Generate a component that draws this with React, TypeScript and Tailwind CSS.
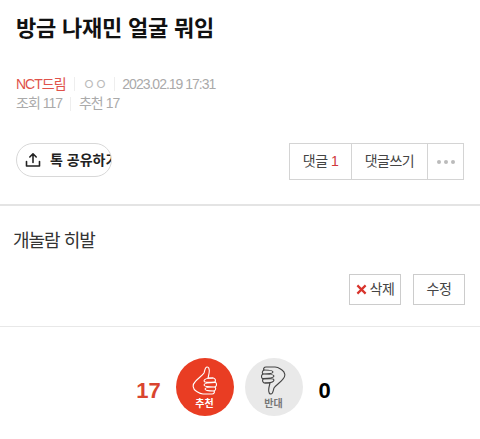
import React from "react";

const ThumbIcon: React.FC<{ className?: string }> = ({ className }) => (
  <svg viewBox="5 4 25 29" fill="none" stroke="currentColor" strokeWidth="1.1" strokeLinejoin="round" strokeLinecap="round" className={className}>
    <path d="M20 5C18 5 18 8 17 11C15 14 10 17 8 20C5 23 6 27 9 29C12 31 13 32 16 32L25 32C27 32 28 30 27 29C29 28 29 26 28 25C30 24 30 21 28 20C29 18 28 16 26 16L21 16C22 12 23 9 22 7C22 6 21 5 20 5Z" />
    <path d="M26 16C21 16 17 17 17 19C17 20.500 20 20.500 28 20M28 20.500C21 20.500 17 21 17 23C17 24.500 21 25 28 25M28 25C22 25 18 25.500 18 27C18 28.500 22 29 27 29" />
  </svg>
);

const App: React.FC = () => {
  return (
    <div className="w-[480px] h-[439px] overflow-hidden bg-white font-['Liberation_Sans','Noto_Sans_CJK_KR',sans-serif]">
      <div className="px-4 pt-[13px]">
        <h1 className="text-[22px] leading-[32px] font-bold text-[#111] tracking-[-0.2px]">방금 나재민 얼굴 뭐임</h1>
        <div className="mt-[29px] flex items-center text-[14px] leading-[20px] tracking-[-1px] text-[#aaa]">
          <span className="text-[#e0524a]">NCT드림</span>
          <span className="mx-[8px] h-[14px] w-px bg-[#eee]" />
          <span className="text-[#bbb]">ㅇㅇ</span>
          <span className="ml-[8px] mr-[7px] h-[14px] w-px bg-[#eee]" />
          <span>2023.02.19 17:31</span>
        </div>
        <div className="flex items-center text-[14px] leading-[19px] tracking-[-1px] text-[#aaa]">
          <span>조회 117</span>
          <span className="mx-[8px] h-[14px] w-px bg-[#eee]" />
          <span>추천 17</span>
        </div>
      </div>

      <div className="mt-[30px] flex items-start justify-between pl-4 pr-4">
        <button className="flex h-[34px] w-[96px] items-center overflow-hidden rounded-full border border-[#d8d8d8] pl-[8px] whitespace-nowrap text-[14px] font-bold text-[#222]">
          <svg viewBox="0 0 16 16" fill="none" stroke="#222" strokeWidth="1.6" strokeLinecap="round" strokeLinejoin="round" className="mr-[9px] h-[16px] w-[16px] shrink-0">
            <path d="M8 10.500V2M4.800 5 8 1.800 11.200 5M1.500 9.500v4.500h13V9.500" />
          </svg>
          <span>톡 공유하기</span>
        </button>
        <div className="flex h-[37px] border border-[#d4d4d4] text-[14px] tracking-[-0.5px] text-[#444]">
          <span className="flex w-[62px] items-center justify-center border-r border-[#d4d4d4]">
            댓글&nbsp;<span className="text-[#d0393a]">1</span>
          </span>
          <span className="flex w-[76px] items-center justify-center border-r border-[#d4d4d4]">댓글쓰기</span>
          <span className="flex w-[35px] items-center justify-center gap-[3px]">
            <i className="h-[4px] w-[4px] rounded-full bg-[#bbb]" />
            <i className="h-[4px] w-[4px] rounded-full bg-[#bbb]" />
            <i className="h-[4px] w-[4px] rounded-full bg-[#bbb]" />
          </span>
        </div>
      </div>

      <div className="mt-[24px] h-[2px] bg-[#e4e4e4]" />

      <p className="mt-[22px] pl-[13px] text-[18px] leading-[26px] text-[#333] tracking-[-1px]">개놀람 히발</p>

      <div className="mt-[20px] flex justify-end gap-[12px] pr-[15px] text-[14px] text-[#444] tracking-[-0.5px]">
        <button className="flex h-[31px] w-[52px] items-center justify-center gap-[3px] border border-[#ccc]">
          <svg viewBox="0 0 12 12" stroke="#d8342c" strokeWidth="2.400" className="h-[11px] w-[11px]">
            <path d="M1.500 1.500l9 9M10.500 1.500l-9 9" />
          </svg>
          삭제
        </button>
        <button className="flex h-[31px] w-[52px] items-center justify-center border border-[#ccc]">수정</button>
      </div>

      <div className="mt-[21px] h-px bg-[#e8e8e8]" />

      <div className="mt-[31px] flex items-center justify-center pr-[4px]">
        <span className="mt-[6px] w-[38px] text-center text-[22px] font-bold text-[#d9452f]">17</span>
        <div className="ml-[8px] flex h-[58px] w-[58px] flex-col items-center justify-center gap-[3px] rounded-full bg-[#e93d23] text-white">
          <ThumbIcon className="h-[29px] w-[25px]" />
          <span className="text-[10px] font-bold leading-[11px]">추천</span>
        </div>
        <div className="ml-[11px] flex h-[58px] w-[58px] flex-col items-center justify-center gap-[3px] rounded-full bg-[#e9e9e9] text-[#444]">
          <ThumbIcon className="h-[29px] w-[25px] rotate-180" />
          <span className="text-[10px] font-bold leading-[11px] text-[#777]">반대</span>
        </div>
        <span className="mt-[6px] w-[44px] text-center text-[22px] font-bold text-black">0</span>
      </div>
    </div>
  );
};

export default App;
